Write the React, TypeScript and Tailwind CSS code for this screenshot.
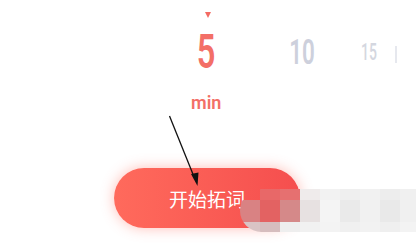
import React from 'react'

const mosaicTop = ['#ffffff00', '#e86868', '#e67070', '#efebeb', '#f2f2f2', '#efefef', '#f1f1f1', '#ededed', '#f0f0f0']
const mosaicMid = ['#d98283', '#e36262', '#d58989', '#e7e1e1', '#f4f4f4', '#eaeaea', '#f1f1f1', '#e9e9e9', '#f0f0f0']
const mosaicBot = ['#d9c4c5', '#d6bdbe', '#eeeeee', '#f1f1f1', '#f3f3f3', '#f0f0f0', '#f2f2f2', '#efefef', '#f3f3f3']

export default function App() {
  return (
    <div className="relative h-[248px] w-[416px] overflow-hidden bg-white" style={{ fontFamily: 'Roboto, "Noto Sans CJK SC", sans-serif' }}>
      {/* picker */}
      <div className="flex h-[18px] items-end pl-[205px]">
        <div className="h-0 w-0 border-x-[3.5px] border-t-[6px] border-x-transparent border-t-[#f36b63]" />
      </div>
      <div className="relative h-[58px]">
        <span className="absolute left-[189px] top-[10px] w-[34px] scale-x-[0.68] text-center text-[48px] leading-[48px] font-semibold text-[#f36f67]">5</span>
        <span className="absolute left-[282px] top-[17px] w-[40px] scale-x-[0.64] text-center text-[35px] leading-[35px] font-semibold text-[#cdd0dc]">10</span>
        <span className="absolute left-[355px] top-[22px] w-[28px] scale-x-[0.58] text-center text-[24px] leading-[24px] font-medium text-[#d4d7e0]">15</span>
        <div className="absolute left-[395px] top-[28px] h-[17px] w-[1.5px] bg-[#e6e8ee]" />
      </div>
      <div className="mt-[17px] pl-[191px] text-[18px] leading-[20px] font-semibold text-[#f36f67]">min</div>

      {/* button */}
      <div className="mt-[55px] pl-[114px]">
        <div className="flex h-[60px] w-[186px] items-center justify-center rounded-full bg-gradient-to-r from-[#ff6a5c] to-[#f54e4e] shadow-[0_0_14px_rgba(255,110,95,0.45)]">
          <span className="text-[19px] leading-none text-white" style={{ fontFamily: '"Noto Sans CJK SC", sans-serif' }}>开始拓词</span>
        </div>
      </div>

      {/* arrow */}
      <svg className="absolute left-0 top-0" width="416" height="248" viewBox="0 0 416 248">
        <line x1="169.5" y1="116" x2="194.5" y2="178" stroke="#111" strokeWidth="1.3" />
        <path d="M191 174 L197.5 186 L198.5 172.5 Z" fill="#111" />
      </svg>

      {/* mosaic watermark */}
      <div className="absolute left-[240px] top-[189px] flex flex-col overflow-hidden rounded-l-[24px]">
        <div className="flex h-[11px]">
          {mosaicTop.map((c, i) => <div key={i} className="h-full w-[20px]" style={{ background: c }} />)}
        </div>
        <div className="flex h-[22px]">
          {mosaicMid.map((c, i) => <div key={i} className="h-full w-[20px]" style={{ background: c }} />)}
        </div>
        <div className="flex h-[10px]">
          {mosaicBot.map((c, i) => <div key={i} className="h-full w-[20px]" style={{ background: c }} />)}
        </div>
      </div>
    </div>
  )
}
